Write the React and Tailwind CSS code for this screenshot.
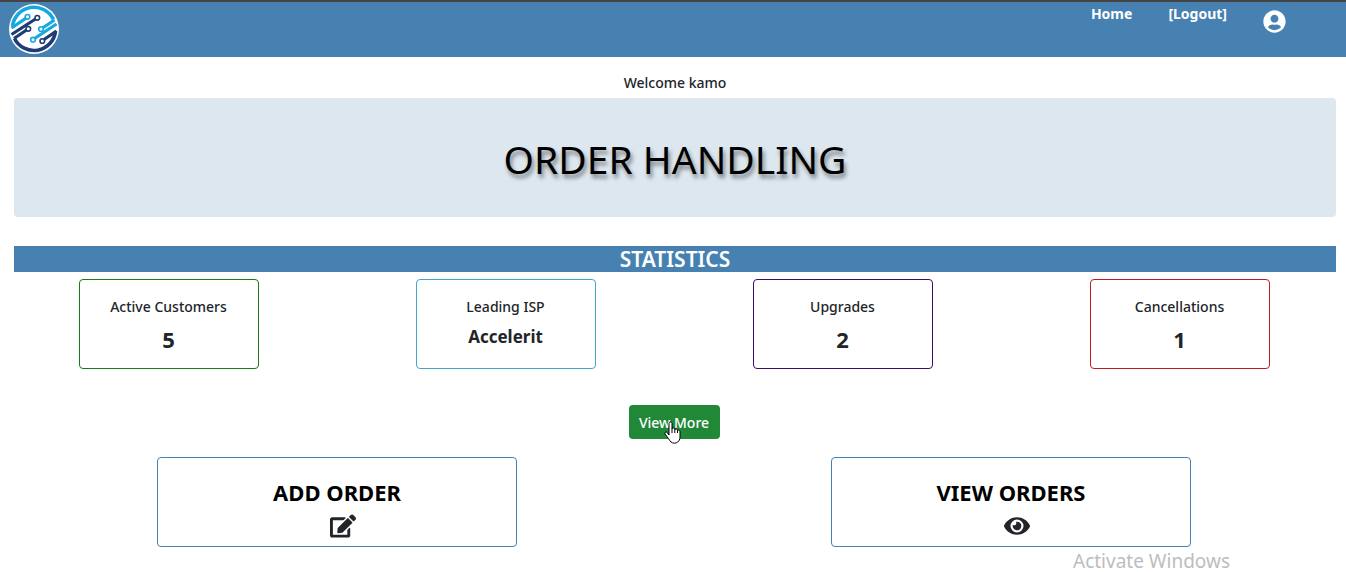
import { FaUserCircle, FaEdit, FaEye } from "react-icons/fa";

const stats = [
  { label: "Active Customers", value: "5", border: "border-[#1a7a1a]", size: "text-[22px] pt-0.5" },
  { label: "Leading ISP", value: "Accelerit", border: "border-[#45a5cb]", size: "text-[17px]" },
  { label: "Upgrades", value: "2", border: "border-[#3d0a66]", size: "text-[22px] pt-0.5" },
  { label: "Cancellations", value: "1", border: "border-[#c4191c]", size: "text-[22px] pt-0.5" },
];

const actions = [
  { label: "ADD ORDER", Icon: FaEdit },
  { label: "VIEW ORDERS", Icon: FaEye },
];

function Logo() {
  return (
    <svg viewBox="0 0 50 50" className="size-[50px]" role="img" aria-label="Company logo">
      <circle cx="25" cy="25" r="25" fill="#fff" />
      <g fill="none">
        <path d="M3.500 22A21.700 21.700 0 0 1 44.500 15.500" stroke="#16a9e1" strokeWidth="3.600" />
        <path d="M46.500 27A21.700 21.700 0 0 1 5.500 34.500" stroke="#1f3c75" strokeWidth="3.600" />
        <path d="M2.500 24L17 14.200" stroke="#16a9e1" strokeWidth="3.200" />
        <path d="M2.500 30.500L26.500 15M5 34.500L17.500 26" stroke="#1f3c75" strokeWidth="3.200" />
        <path d="M45.500 16L33.500 24M47.500 20L25.500 34.500" stroke="#16a9e1" strokeWidth="3.200" />
        <path d="M47.500 27L35 35.500" stroke="#1f3c75" strokeWidth="3.200" />
      </g>
      <g fill="#fff" strokeWidth="1.600">
        <g stroke="#16a9e1">
          <circle cx="18.500" cy="12.800" r="2.300" />
          <circle cx="32" cy="25" r="2.300" />
          <circle cx="24" cy="35.700" r="2.300" />
        </g>
        <g stroke="#1f3c75">
          <circle cx="28.300" cy="13.800" r="2.300" />
          <circle cx="19.300" cy="24.800" r="2.300" />
          <circle cx="33.300" cy="37" r="2.300" />
        </g>
      </g>
    </svg>
  );
}

function HandCursor() {
  return (
    <svg viewBox="0 0 17 23" className="pointer-events-none absolute left-[35px] top-4 h-[23px] w-[17px]" aria-hidden="true">
      <path
        d="M5 14V2.500C5 .5 8 .5 8 2.500V8c0-1.500 2.800-1.500 2.800.4V9c0-1.500 2.700-1.300 2.700.4v.6c0-1.300 2.500-1.200 2.500.6V16c0 2.500-1 4-2.200 5-1.800 1.600-5 1.600-6.800 0C5.500 19.500 3.500 16 1 13c-1-1.500 1-2.700 2.200-1.500Z"
        fill="#fff"
        stroke="#000"
        strokeLinejoin="round"
      />
      <path d="M8 8v4M10.800 9v3M13.500 10v2" stroke="#000" />
    </svg>
  );
}

export default function App() {
  return (
    <div className="relative overflow-hidden bg-white font-['Noto_Sans','Open_Sans',sans-serif] text-[#212529]">
      <header className="flex h-[57px] items-start justify-between border-t-2 border-[#444] bg-[#4681b1] pl-[9px] pr-15 pt-0.5">
        <a href="#home"><Logo /></a>
        <nav className="flex items-start text-[14px] leading-5 font-bold text-white">
          <a href="#home" className="mr-9">Home</a>
          <a href="#logout" className="mr-9">[Logout]</a>
          <a href="#profile" aria-label="Profile" className="pt-1.5"><FaUserCircle className="size-[23px]" /></a>
        </nav>
      </header>

      <main>
        <div className="pl-3.5 pr-2.5 text-center">
          <p className="pt-4 pb-[5px] text-[14px] leading-5 font-medium">Welcome kamo</p>
          <div className="rounded bg-[#dde7ef] pt-[37px] pb-[35px]">
            <h1 className="text-[39px] leading-[47px] font-normal text-black [text-shadow:2px_4px_4px_rgba(0,0,0,0.45)]">ORDER HANDLING</h1>
          </div>
          <h2 className="mt-[29px] bg-[#4681b1] text-[21px] leading-[26px] font-semibold text-white">STATISTICS</h2>
        </div>

        <section className="-mr-0.5 grid grid-cols-4 justify-items-center pt-[7px]">
          {stats.map((s) => (
            <article key={s.label} className={`h-[90px] w-[180px] rounded border pt-[17px] text-center ${s.border}`}>
              <h3 className="text-[14px] leading-5 font-medium">{s.label}</h3>
              <p className={`mt-1 leading-8 font-bold ${s.size}`}>{s.value}</p>
            </article>
          ))}
        </section>

        <div className="flex justify-center pt-9 pl-0.5">
          <div className="relative">
            <button type="button" className="h-[34px] w-[91px] rounded bg-[#218838] text-[14px] font-medium text-white">View More</button>
            <HandCursor />
          </div>
        </div>

        <section className="-mr-0.5 grid grid-cols-2 justify-items-center pt-[18px]">
          {actions.map(({ label, Icon }) => (
            <a key={label} href="#orders" className="flex h-[90px] w-[360px] flex-col items-center rounded border border-[#4681b1] pt-[19px]">
              <span className="text-[22px] leading-[30px] font-bold text-black">{label}</span>
              <span className="pt-1.5 pl-3"><Icon className="size-[26px]" /></span>
            </a>
          ))}
        </section>
        <p className="pr-29 text-right text-[19px] leading-7 font-normal text-[#bdbdbd]">Activate Windows</p>
      </main>
    </div>
  );
}
